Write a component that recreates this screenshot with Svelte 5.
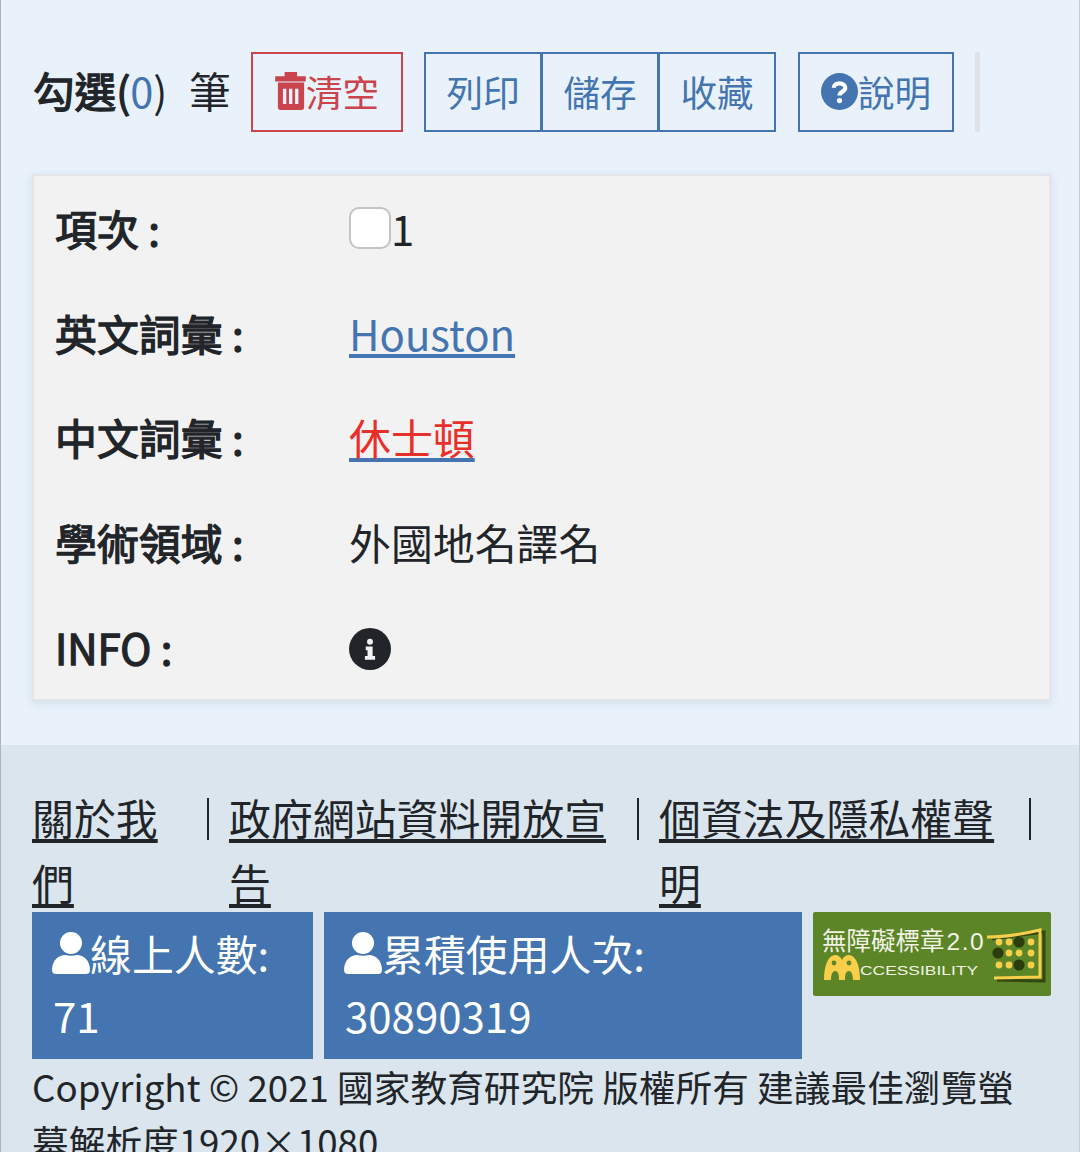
<script lang="ts">
  const rows = [
    { label: "英文詞彙", value: "Houston", kind: "en" },
    { label: "中文詞彙", value: "休士頓", kind: "zh" },
    { label: "學術領域", value: "外國地名譯名", kind: "plain" },
  ];

  const links = [
    { text: "關於我們", width: 126, gap: 197 },
    { text: "政府網站資料開放宣告", width: 378, gap: 430 },
    { text: "個資法及隱私權聲明", width: 337, gap: 392 },
  ];

  const stats = [
    { label: "線上人數:", value: "71", width: 281 },
    { label: "累積使用人次:", value: "30890319", width: 478 },
  ];

  const dots = [
    [186, 30, 3.4], [196, 30, 3.4], [206, 30, 5.6], [218, 30, 3.4],
    [185, 41, 5.6], [196, 41, 3.4], [206, 41, 3.4], [218, 41, 3.4],
    [186, 53, 3.4], [196, 53, 3.4], [206, 53, 5.6], [218, 53, 3.4],
  ];
</script>

<div class="page">
  <main class="content">
    <div class="toolbar">
      <div class="count"><span class="count-title">勾選(</span><span class="count-num">0</span>)</div>
      <span class="unit">筆</span>
      <button type="button" class="btn btn-clear">
        <svg class="icon" viewBox="0 0 91 113" width="31" height="38" fill="currentColor">
          <path d="M28 0h37v13h26v15H0V13h28zM8 31h78v74c0 5-3 8-8 8H16c-5 0-8-3-8-8zm15 19v45h10V50zm18 0v45h10V50zm18 0v45h10V50z" fill-rule="evenodd" />
        </svg>清空
      </button>
      <div class="btn-group">
        <button type="button" class="btn">列印</button>
        <button type="button" class="btn">儲存</button>
        <button type="button" class="btn">收藏</button>
      </div>
      <button type="button" class="btn btn-help">
        <svg class="icon" viewBox="0 0 512 512" width="37" height="37">
          <circle cx="256" cy="256" r="256" fill="currentColor" />
          <path d="M178 205c0-42 34-62 78-62s80 24 80 64c0 52-80 50-80 105" fill="none" stroke="#fff" stroke-width="58" />
          <circle cx="256" cy="382" r="36" fill="#fff" />
        </svg>說明
      </button>
      <div class="toolbar-end"></div>
    </div>

    <section class="card">
      <div class="row">
        <div class="label">項次 :</div>
        <div class="value"><input type="checkbox" class="check" />1</div>
      </div>
      {#each rows as row}
        <div class="row">
          <div class="label">{row.label} :</div>
          <div class="value">
            {#if row.kind === "en"}
              <a href="#top" class="link">{row.value}</a>
            {:else if row.kind === "zh"}
              <a href="#top" class="link"><span class="red">{row.value}</span></a>
            {:else}
              {row.value}
            {/if}
          </div>
        </div>
      {/each}
      <div class="row">
        <div class="label">INFO :</div>
        <div class="value">
          <svg class="info" viewBox="0 0 512 512" width="42" height="42">
            <circle cx="256" cy="256" r="256" fill="#212529" />
            <circle cx="256" cy="168" r="36" fill="#f2f2f2" />
            <path d="M204 226h84v116h30v46H194v-46h32v-70h-22z" fill="#f2f2f2" />
          </svg>
        </div>
      </div>
    </section>
  </main>

  <footer class="footer">
    <ul class="links">
      {#each links as item}
        <li class="links-item" style="width: {item.gap}px">
          <a href="#top" class="links-text" style="width: {item.width}px">{item.text}</a>
          <span class="links-sep"></span>
        </li>
      {/each}
    </ul>

    <div class="stats">
      {#each stats as stat}
        <div class="stat" style="width: {stat.width}px">
          <div class="stat-label">
            <svg class="stat-icon" viewBox="0 0 38 44" width="38" height="44" fill="#fff">
              <circle cx="19" cy="12" r="11" />
              <path d="M0 39c0-10 7-15 13-15 4 1 8 1 12 0 6 0 13 5 13 15 0 3-2 4-4 4H4c-2 0-4-1-4-4z" />
            </svg>{stat.label}
          </div>
          <div class="stat-value">{stat.value}</div>
        </div>
      {/each}
      <div class="badge">
        <svg viewBox="0 0 238 84" width="238" height="84">
          <text x="9" y="38" class="badge-zh">無障礙標章<tspan class="badge-num" dx="2">2.0</tspan></text>
          <path d="M11 68c0-16 5-25 11-25 3 0 6 2 7 5 1-3 4-5 7-5 6 0 11 9 11 25h-7c0-6-2-9-4-9-3 0-4 3-4 9h-6c0-6-1-9-4-9-2 0-4 3-4 9z" fill="#f7cf4a" />
          <circle cx="21" cy="51" r="2.4" fill="#5b8526" /><circle cx="36" cy="51" r="2.4" fill="#5b8526" />
          <text x="47" y="63" class="badge-en" textLength="118" lengthAdjust="spacingAndGlyphs">CCESSIBILITY</text>
          <path d="M177 26l52-7v49l-47-1" fill="none" stroke="#33470f" stroke-width="3" transform="translate(2 1)" />
          <path d="M174 25c18 0 36-3 53-7v47l-46 1" fill="none" stroke="#f7cf4a" stroke-width="3" />
          {#each dots as [cx, cy, r]}
            <circle {cx} {cy} {r} fill={r > 4 ? "#2c3d0d" : "#f7cf4a"} />
          {/each}
        </svg>
      </div>
    </div>

    <p class="copy">Copyright © 2021 國家教育研究院 版權所有 建議最佳瀏覽螢幕解析度1920×1080</p>
  </footer>
</div>

<style>
  :global(html),
  :global(body) {
    margin: 0;
    height: 1152px;
    overflow: hidden;
  }

  .page {
    font-family: "Noto Sans CJK TC", "Noto Sans", sans-serif;
    color: #212529;
    font-size: 41.9px;
    height: 1152px;
    overflow: hidden;
    box-sizing: border-box;
    border-left: 1px solid #a9b4c0;
    border-right: 1px solid #c5ced8;
    background: #dbe5ee;
  }

  .content {
    background: #e9f2fb;
    height: 745px;
    box-sizing: border-box;
    padding: 52px 28px 0 31px;
  }

  .toolbar {
    display: flex;
    align-items: center;
    height: 80px;
  }

  .count {
    white-space: nowrap;
    width: 156px;
    margin-left: 1px;
    padding-bottom: 4px;
    font-size: 41.6px;
  }

  .count-title {
    -webkit-text-stroke: 1.3px #212529;
  }

  .count-num {
    color: #4475b0;
  }

  .unit {
    width: 62px;
    line-height: 1;
    padding-bottom: 2px;
    font-size: 41.6px;
  }

  .btn {
    display: flex;
    align-items: center;
    justify-content: center;
    box-sizing: border-box;
    height: 80px;
    padding: 0 0 2px;
    font-family: inherit;
    font-size: 36.6px;
    color: #4475b0;
    background: transparent;
    border: 2px solid #4475b0;
    border-radius: 0;
  }

  .btn-clear {
    width: 152px;
    color: #c9444c;
    border-color: #c9444c;
  }

  .btn-group {
    display: flex;
    margin-left: 21px;
  }

  .btn-group .btn {
    width: 118px;
  }

  .btn-group .btn + .btn {
    margin-left: -1px;
  }

  .btn-help {
    width: 156px;
    margin-left: 22px;
  }

  .toolbar-end {
    width: 5px;
    height: 80px;
    margin-left: 21px;
    background: #dfe3e8;
  }

  .icon {
    flex-shrink: 0;
  }

  .card {
    margin: 42px 0 0;
    height: 527px;
    box-sizing: border-box;
    padding: 0 21px;
    background: #f2f2f2;
    border: 2px solid #e4e4ea;
    box-shadow: 0 2px 8px rgba(120, 140, 165, 0.22);
  }

  .row {
    display: flex;
    align-items: center;
    box-sizing: border-box;
    height: 104.8px;
    padding-bottom: 2px;
  }

  .label {
    width: 294px;
    -webkit-text-stroke: 1.3px #212529;
    white-space: nowrap;
  }

  .value {
    display: flex;
    align-items: center;
  }

  .check {
    appearance: none;
    width: 42px;
    height: 42px;
    margin: 2px 0 0;
    background: #fff;
    border: 2px solid #c4c4c4;
    border-radius: 10px;
    box-sizing: border-box;
  }

  .info {
    margin-top: 4px;
  }

  .link {
    color: #4475b0;
    text-decoration: underline;
    text-underline-offset: 3px;
  }

  .red {
    color: #e8302a;
  }

  .footer {
    padding: 40px 28px 0 31px;
  }

  .links {
    display: flex;
    list-style: none;
    margin: 0;
    padding: 0;
    height: 127px;
    line-height: 64.5px;
  }

  .links-item {
    display: flex;
    flex-shrink: 0;
    justify-content: space-between;
    align-items: flex-start;
    padding-right: 20px;
    box-sizing: border-box;
  }

  .links-text {
    color: #212529;
    text-decoration: underline;
    text-underline-offset: 4px;
    display: block;
  }

  .links-sep {
    width: 2px;
    height: 42px;
    margin-top: 13px;
    background: #212529;
    flex-shrink: 0;
  }

  .stats {
    display: flex;
    align-items: flex-start;
    gap: 11px;
  }

  .stat {
    box-sizing: border-box;
    height: 147px;
    padding: 10px 20px 0;
    color: #fff;
    background: #4475b0;
    line-height: 62px;
  }

  .stat-label {
    display: flex;
    align-items: center;
    white-space: nowrap;
  }

  .stat-icon {
    flex-shrink: 0;
  }

  .stat-value {
    font-size: 42px;
    padding-left: 1px;
  }

  .badge {
    width: 238px;
    height: 84px;
    background: #5b8526;
    border-radius: 2px;
    line-height: 0;
  }

  .badge-zh {
    font-size: 24.5px;
    fill: #f2f2e4;
  }

  .badge-num {
    font-family: "Liberation Sans", sans-serif;
    letter-spacing: 1.5px;
  }

  .badge-en {
    font-family: "Liberation Sans", sans-serif;
    font-size: 13.6px;
    fill: #f2f2e4;
  }

  .copy {
    margin: 0;
    font-size: 36.7px;
    line-height: 55px;
    padding: 0 30px 0 0;
  }
</style>
